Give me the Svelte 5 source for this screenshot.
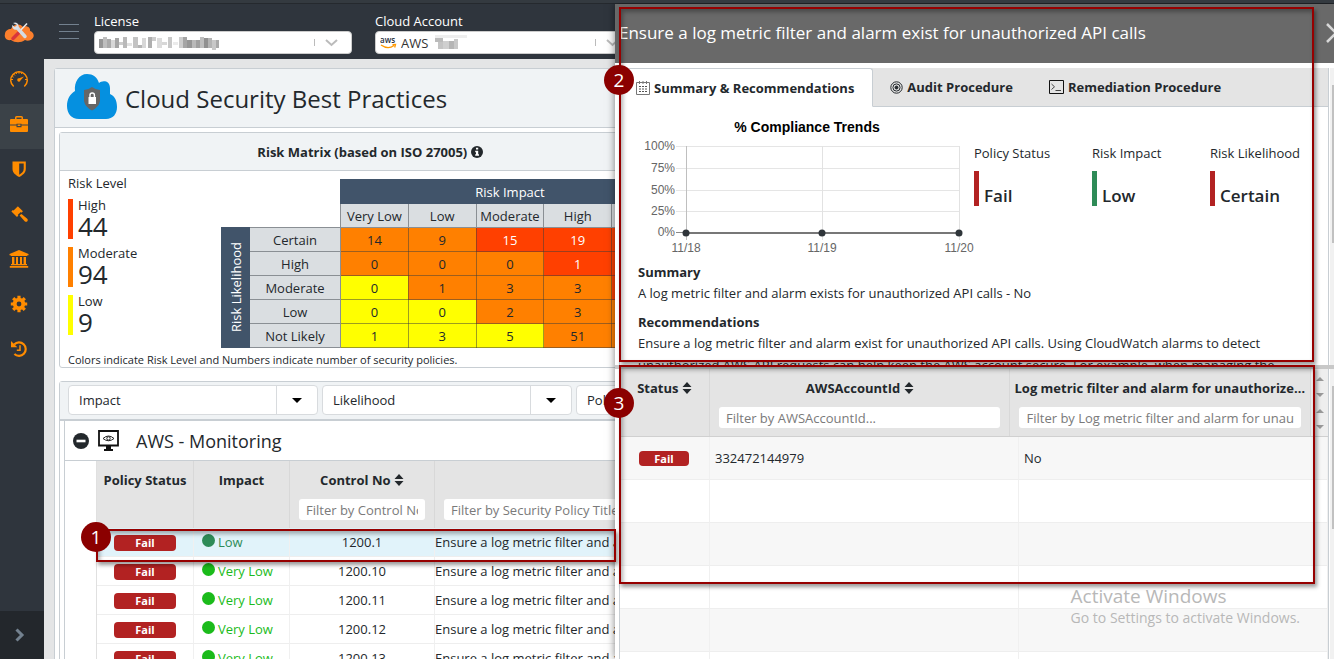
<script>
  const nav = ['gauge', 'case', 'shield', 'gavel', 'bank', 'gear', 'history'];
  const levels = [
    { name: 'High', count: 44, color: '#ff4000' },
    { name: 'Moderate', count: 94, color: '#ff8000' },
    { name: 'Low', count: 9, color: '#ffff00' }
  ];
  const impacts = ['Very Low', 'Low', 'Moderate', 'High', 'Very High'];
  const matrix = [
    { name: 'Certain', cells: [[14, 'o'], [9, 'o'], [15, 'r'], [19, 'r'], [0, 'r']] },
    { name: 'High', cells: [[0, 'o'], [0, 'o'], [0, 'o'], [1, 'r'], [0, 'r']] },
    { name: 'Moderate', cells: [[0, 'y'], [1, 'o'], [3, 'o'], [3, 'o'], [0, 'r']] },
    { name: 'Low', cells: [[0, 'y'], [0, 'y'], [2, 'o'], [3, 'o'], [0, 'o']] },
    { name: 'Not Likely', cells: [[1, 'y'], [3, 'y'], [5, 'y'], [51, 'o'], [0, 'o']] }
  ];
  const filters = ['Impact', 'Likelihood', 'Policy Status'];
  const title = 'Ensure a log metric filter and alarm exist for unauthorized API calls';
  const policies = [
    { impact: 'Low', no: '1200.1', selected: true },
    { impact: 'Very Low', no: '1200.10' },
    { impact: 'Very Low', no: '1200.11' },
    { impact: 'Very Low', no: '1200.12' },
    { impact: 'Very Low', no: '1200.13' }
  ];
  const stats = [
    { name: 'Policy Status', value: 'Fail', color: '#b22222' },
    { name: 'Risk Impact', value: 'Low', color: '#2e8b57' },
    { name: 'Risk Likelihood', value: 'Certain', color: '#b22222' }
  ];
  const ticks = ['100%', '75%', '50%', '25%', '0%'];
  const tickY = [19, 41, 63, 84, 105];
  const days = [['11/18', 48], ['11/19', 184], ['11/20', 321]];
  const mask = [
    [0, 4, 4, 9, 150], [4, 2, 4, 11, 190], [8, 4, 4, 9, 170], [12, 5, 4, 8, 215], [16, 3, 4, 10, 165],
    [20, 7, 4, 3, 205], [24, 2, 4, 11, 185], [28, 8, 5, 3, 225], [34, 2, 5, 11, 195], [39, 10, 4, 3, 180],
    [43, 3, 4, 10, 215], [49, 2, 4, 11, 175], [53, 2, 4, 4, 205], [58, 3, 5, 10, 220], [63, 7, 5, 3, 215],
    [69, 2, 4, 11, 200], [74, 7, 5, 3, 235], [80, 2, 4, 11, 205], [84, 2, 4, 11, 165], [88, 5, 5, 8, 150],
    [93, 5, 4, 8, 185], [97, 5, 4, 8, 160], [101, 2, 4, 11, 190], [105, 3, 4, 10, 145], [109, 3, 4, 10, 180],
    [113, 5, 4, 10, 200], [117, 5, 3, 8, 170]
  ];
</script>

{#snippet sort()}
  <svg class="sort" width="10" height="12" viewBox="0 0 10 12"><path d="M5 0l4.500 5h-9zM5 12l4.500-5h-9z" /></svg>
{/snippet}

{#snippet icon(name)}
  <svg width="20" height="20" viewBox="0 0 20 20" fill="#ff8c00" stroke="#ff8c00" stroke-width="0">
    {#if name === 'gauge'}
      <path d="M4.700 17.500A8.300 8.300 0 1 1 15.300 17.500" fill="none" stroke-width="1.500" />
      <path d="M2 10.500h2M16 10.500h2M10 2.500v2.200M4.500 5l1.500 1.500M7 3.500l.6 1.500M13 3.500L12.400 5M3 7.500l1.600.7" stroke-width="1" />
      <path d="M15 7.500l-3.400 3.800a1.700 1.700 0 1 1-1.500-2z" />
    {:else if name === 'case'}
      <path fill-rule="evenodd" d="M6 5V3.500Q6 2 7.500 2h5Q14 2 14 3.500V5h4q1 0 1 1v4.500h-6.500V9.800h-5v.7H1V6q0-1 1-1zM7.500 5h5V3.500h-5zM1 11.500h6.500v1.700h5v-1.700H19V17q0 1-1 1H2q-1 0-1-1z" />
      <path d="M8.600 10.500h2.800v1.500H8.600z" />
    {:else if name === 'shield'}
      <path fill-rule="evenodd" d="M3.500 2.500h13.300V10c0 4-3.700 6.500-6.600 8C7.300 16.500 3.500 14 3.500 10zM10.200 4.500v11.200c2.500-1.500 4.500-3.200 4.500-6V4.500z" />
    {:else if name === 'gavel'}
      <path d="M8.300 1.700l5.600 5.600-1.400 1.400-.7-.7-1.500 1.500 1.200 1.200 1-.8 6 5.200q.8 1.300-.3 2.300-1 .9-2.300 0l-5.300-5.800.8-1-1.200-1.200-1.500 1.500.7.700L8 13 2.400 7.400 3.800 6l.8.6 4.300-4.300z" />
    {:else if name === 'bank'}
      <path d="M10 1l9.500 4v1.300h-1.200V7H1.700v-.7H.5V5zM3 8h2.400v7H7V8h2v7h2V8h2v7h1.600V8H17v7h1v1.300H2V15h1zM.8 17h18.400v1.800H.8z" />
    {:else if name === 'gear'}
      <circle cx="10" cy="10" r="4.300" fill="none" stroke-width="3.800" />
      <path d="M10 1.800v3M10 15.200v3M1.800 10h3M15.200 10h3M4.200 4.200l2 2M13.800 13.800l2 2M4.200 15.800l2-2M13.800 6.200l2-2" stroke-width="3.200" />
    {:else}
      <path d="M5.200 5.500A6.700 6.700 0 1 1 5.400 15" fill="none" stroke-width="2.200" />
      <path d="M2 2l6.300 6.300H2z" />
      <path d="M11 6.300v5H7.800" fill="none" stroke-width="1.500" />
    {/if}
  </svg>
{/snippet}

<div class="app">
  <nav class="side">
    <a class="logo" href="#home" aria-label="Home">
      <svg width="31" height="22" viewBox="0 0 31 22">
        <path d="M7 19C2 20 0 16 1 13c0-3 3-5 6-5 2-5 9-6 12-2 4-2 8 1 7 4 4 1 5 6 2 8-2 2-5 2-7 1-4 3-10 3-14 0z" fill="#fb7f2d" />
        <path d="M23 2.500L14 12" stroke="#e8eaee" stroke-width="1.500" />
        <path d="M14.500 12L9 17.500" stroke="#d9363b" stroke-width="3.500" stroke-linecap="round" />
        <path d="M13 6.500l8 9" stroke="#d5dbe2" stroke-width="3.500" stroke-linecap="round" />
        <path d="M9 2c4-2 7 2 5 6-3 2-6 0-6-4l3 2 2-2z" fill="#dbe1e8" />
      </svg>
    </a>
    {#each nav as n}
      <a class="item" class:on={n === 'case'} href={'#' + n} aria-label={n}>{@render icon(n)}</a>
    {/each}
    <button class="expand" aria-label="Expand">
      <svg width="12" height="14" viewBox="0 0 12 14"><path d="M2.500 1.500L8 7l-5.500 5.500" fill="none" stroke="#73818f" stroke-width="3" /></svg>
    </button>
  </nav>

  <div class="main">
    <header class="top">
      <button class="burger" aria-label="Menu"><i></i><i></i><i></i></button>
      <div class="pick">
        <label for="license">License</label>
        <div class="box">
          <svg class="mask" width="120" height="16" viewBox="0 0 120 16">
            {#each mask as [x, y, w, h, g]}<rect {x} {y} width={w} height={h} fill="rgb({g},{g},{g})" />{/each}
          </svg>
          <select id="license"><option></option></select>
          <span class="arrow"><svg width="13" height="8" viewBox="0 0 13 8"><path d="M1 1l5.500 5L12 1" /></svg></span>
        </div>
      </div>
      <div class="pick">
        <label for="account">Cloud Account</label>
        <div class="box">
          <svg width="17" height="14" viewBox="0 0 17 14">
            <text x="0" y="7" font-size="8" font-weight="600" fill="#252f3e">aws</text>
            <path d="M1 9q7 5 13 0.500M12.500 8.700l3-.2-.8 3" fill="none" stroke="#ff9900" stroke-width="1.300" />
          </svg>
          <select id="account" class="aws"><option>AWS</option></select>
          <svg class="over" width="32" height="16" viewBox="0 0 32 16">
            <path d="M0 0h32v3H0z" fill="#eee" /><path d="M0 3h8v4H0z" fill="#bbb" /><path d="M3 7h5v7H3z" fill="#c4c4c4" />
            <path d="M8 6h6v8H8z" fill="#cfcfcf" /><path d="M14 6h5v8h-5z" fill="#b5b5b5" /><path d="M19 4h4v10h-4z" fill="#c8c8c8" />
          </svg>
          <span class="arrow"><svg width="13" height="8" viewBox="0 0 13 8"><path d="M1 1l5.500 5L12 1" /></svg></span>
        </div>
      </div>
    </header>

    <main class="page">
      <div class="title">
        <svg width="50" height="45" viewBox="0 0 50 45">
          <path d="M12 45C4 45 0 39 0 32c0-7 3-12 8-15C7 8 12 0 20 0c6 0 10 3 12 9 3-3 11-3 11 5v6c5 2 7 7 7 13 0 7-4 12-11 12z" fill="#0590e0" />
          <path d="M25 13q4 3 8 3v11q-1 6-8 9.500-7-3.500-8-9.500V16q4 0 8-3z" fill="#666" />
          <path d="M21.500 23h7.500v7h-7.500z" fill="#fff" />
          <path d="M23 23v-2q0-2 2.200-2t2.200 2v2" fill="none" stroke="#fff" stroke-width="1.400" />
        </svg>
        <h1>Cloud Security Best Practices</h1>
      </div>
      <div class="body">
        <div class="halves">
          <section class="card">
            <h2>Risk Matrix (based on ISO 27005)
              <svg width="12" height="12" viewBox="0 0 12 12"><circle cx="6" cy="6" r="6" fill="#23282c" /><path d="M5 1.800h2.200v1.800H5zM4.200 4.700h3v3.600h.8v1.500H4.200V8.300H5V6.200h-.8z" fill="#fff" /></svg>
            </h2>
            <div class="risk">
              <div class="levels">
                <h3>Risk Level</h3>
                {#each levels as l}
                  <div class="level" style:border-color={l.color}><span>{l.name}</span><b>{l.count}</b></div>
                {/each}
              </div>
              <table class="matrix">
                <colgroup><col class="c1" /><col class="c2" />{#each impacts as _}<col />{/each}</colgroup>
                <thead>
                  <tr><td class="none" colspan="2"></td><th class="dark" colspan="5">Risk Impact</th></tr>
                  <tr><td class="none" colspan="2"></td>{#each impacts as i}<th>{i}</th>{/each}</tr>
                </thead>
                <tbody>
                  {#each matrix as row, r}
                    <tr>
                      {#if r === 0}<th class="dark tall" rowspan="5"><span>Risk Likelihood</span></th>{/if}
                      <th>{row.name}</th>
                      {#each row.cells as [n, c]}<td class={c}>{n}</td>{/each}
                    </tr>
                  {/each}
                </tbody>
              </table>
            </div>
            <p class="note">Colors indicate Risk Level and Numbers indicate number of security policies.</p>
          </section>
          <section class="card"></section>
        </div>

        <section class="list">
          <div class="filters">
            {#each filters as f}
              <div class="combo">
                <select aria-label={f}><option>{f}</option></select>
                <span><svg width="10" height="5" viewBox="0 0 10 5"><path d="M0 0h10L5 5z" /></svg></span>
              </div>
            {/each}
          </div>
          <div class="group">
            <div class="ghead">
              <button class="fold" aria-label="Collapse"><svg width="16" height="16" viewBox="0 0 16 16"><circle cx="8" cy="8" r="8" fill="#23282c" /><path d="M3.500 6.700h9v2.600h-9z" fill="#fff" /></svg></button>
              <svg width="21" height="21" viewBox="0 0 21 21"><path d="M1 1h19v14.500H1z" fill="#fff" stroke="#111" stroke-width="1.800" /><path d="M8 16h5v3h2v2H6v-2h2z" fill="#111" /><path d="M5 8.500q5.500-5 11 0-5.500 4.500-11 0z" fill="none" stroke="#222" /><circle cx="10.500" cy="8.400" r="1.700" fill="none" stroke="#222" /></svg>
              <h2>AWS - Monitoring</h2>
            </div>
            <table class="rows">
              <thead>
                <tr>
                  <th><span>Policy Status</span></th>
                  <th><span>Impact</span></th>
                  <th><span>Control No {@render sort()}</span><input aria-label="Control No" placeholder="Filter by Control No..." /></th>
                  <th><span>Security Policy Title {@render sort()}</span><input aria-label="Title" placeholder="Filter by Security Policy Title..." /></th>
                </tr>
              </thead>
              <tbody>
                {#each policies as p}
                  <tr class:selected={p.selected}>
                    <td><span class="fail">Fail</span></td>
                    <td class:low={p.impact === 'Low'}><i></i>{p.impact}</td>
                    <td>{p.no}</td>
                    <td>{title}</td>
                  </tr>
                {/each}
              </tbody>
            </table>
          </div>
        </section>
      </div>
    </main>
  </div>

  <aside class="drawer">
    <header>
      <h2>{title}</h2>
      <button aria-label="Close"><svg width="20" height="20" viewBox="0 0 20 20"><path d="M1 1l18 18M19 1L1 19" stroke="#d8d8d8" stroke-width="2.500" /></svg></button>
    </header>
    <div class="pane">
      <div class="content">
        <div class="tabs" role="tablist">
          <button role="tab" aria-selected="true" class="on">
            <svg width="14" height="14" viewBox="0 0 14 14" fill="none" stroke="#777"><path d="M.5 1.500h13v12H.5zM3.500 0v3M7 0v3M10.500 0v3" /><path d="M3 5.500h8M3 8h8M3 10.500h8" stroke="#555" stroke-dasharray="2 1" /></svg>
            Summary &amp; Recommendations
          </button>
          <button role="tab" aria-selected="false">
            <svg width="13" height="13" viewBox="0 0 13 13" fill="none" stroke="#23282c"><circle cx="6.500" cy="6.500" r="5.700" /><circle cx="6.500" cy="6.500" r="3.600" /><circle cx="6.500" cy="6.500" r="1.500" fill="#23282c" /></svg>
            Audit Procedure
          </button>
          <button role="tab" aria-selected="false">
            <svg width="15" height="14" viewBox="0 0 15 14" fill="none" stroke="#111"><path d="M.5.5h14v13H.5z" /><path d="M2.500 4l3 2.800-3 2.700M6.500 10.500H12" stroke="#444" /></svg>
            Remediation Procedure
          </button>
        </div>
        <div class="info">
          <div class="glance">
            <svg class="chart" width="330" height="130" viewBox="0 0 330 130">
              <text x="169" y="5" class="ct">% Compliance Trends</text>
              {#each ticks as t, i}
                <path d="M38 {tickY[i]}.5H321" stroke="#e5e5e5" />
                <text x="37" y={tickY[i] + 4} text-anchor="end">{t}</text>
              {/each}
              {#each days as [d, x]}
                <path d="M{x}.5 19V113" stroke={x === 48 ? '#bfbfbf' : '#e2e2e2'} />
                <text {x} y="125" text-anchor="middle">{d}</text>
              {/each}
              <path d="M38 105.500H321" stroke="#888" />
              <path d="M48 106H321" stroke="#777" stroke-width="2" />
              {#each days as [, x]}<circle cx={x} cy="106" r="3.500" fill="#2f353a" />{/each}
            </svg>
            <div class="stats">
              {#each stats as s}
                <div><span>{s.name}</span><b style:border-color={s.color}>{s.value}</b></div>
              {/each}
            </div>
          </div>
          <h4>Summary</h4>
          <p>A log metric filter and alarm exists for unauthorized API calls - No</p>
          <h4>Recommendations</h4>
          <p>Ensure a log metric filter and alarm exist for unauthorized API calls. Using CloudWatch alarms to detect unauthorized AWS API requests can help keep the AWS account secure. For example, when managing the</p>
        </div>
      </div>
      <div class="bar"><i></i></div>
    </div>
    <div class="split"></div>
    <div class="pane results">
      <div class="content">
        <table class="found">
          <thead>
            <tr>
              <th><span>Status {@render sort()}</span></th>
              <th><span>AWSAccountId {@render sort()}</span><input aria-label="AWSAccountId" placeholder="Filter by AWSAccountId..." /></th>
              <th><span>Log metric filter and alarm for unauthorized API calls</span><input aria-label="Log metric filter" placeholder="Filter by Log metric filter and alarm for unauthorized API calls..." /></th>
              <td class="spin">{#each [0, 1] as _}<i class="up"></i><i class="down"></i>{/each}</td>
            </tr>
          </thead>
          <tbody>
            <tr><td><span class="fail">Fail</span></td><td>332472144979</td><td>No</td></tr>
            {#each [1, 2, 3, 4, 5] as _}<tr><td></td><td></td><td></td></tr>{/each}
          </tbody>
        </table>
      </div>
      <div class="bar low"><i></i></div>
    </div>
    <div class="activate"><b>Activate Windows</b><span>Go to Settings to activate Windows.</span></div>
  </aside>

  <div class="mark one"><b>1</b></div>
  <div class="mark two"><b>2</b></div>
  <div class="mark three"><b>3</b></div>
</div>

<style>
  :global(body) { margin: 0; overflow: hidden; }
  .app, .app :global(*) { box-sizing: border-box; }
  .app {
    position: relative; display: flex; height: 100vh; overflow: hidden;
    font: 13px/20px "Open Sans", "Noto Sans", sans-serif; color: #23282c;
    background: #e4e5e6; border-top: 3px solid #343a40;
  }
  h1, h2, h3, h4, p { margin: 0; }
  button { border: 0; padding: 0; background: none; font: inherit; color: inherit; }
  select, input { font: inherit; color: inherit; min-width: 0; }
  svg { flex: none; }
  i { display: block; }

  .side { flex: none; width: 44px; display: flex; flex-direction: column; background: #2f353d; border-top: 1px solid #25292e; }
  .logo { height: 55px; display: flex; align-items: center; padding-left: 4px; }
  .item { height: 45px; display: flex; align-items: center; justify-content: center; padding: 0 6px 5px 0; }
  .item.on { background: #3b4248; }
  .expand { margin-top: auto; height: 48px; background: #23272c; padding: 0 4px 0 0; display: flex; align-items: center; justify-content: center; }

  .main { flex: 1; min-width: 0; display: flex; flex-direction: column; }
  .top { height: 56px; flex: none; display: flex; gap: 23px; padding-left: 15px; background: #2f353d; border-top: 1px solid #25292e; }
  .burger { width: 20px; margin: 20px -8px 0 0; display: flex; flex-direction: column; gap: 6px; }
  .burger i { width: 20px; height: 1px; background: #73818f; }
  .pick { width: 258px; padding-top: 7px; color: #fff; }
  .pick label { display: block; }
  .box { display: flex; align-items: center; gap: 4px; height: 23px; padding: 0 4px; background: #fff; border: 1px solid #ccc; border-radius: 4px; color: #333; }
  .box select { flex: 1; border: 0; background: none; appearance: none; padding: 0; outline: 0; }
  .box select.aws { flex: none; width: 30px; }
  .over { margin-right: auto; }
  .arrow { width: 33px; height: 7px; display: flex; align-items: center; justify-content: center; border-left: 1px solid #bbb; }
  .arrow path { fill: none; stroke: #bbb; stroke-width: 2; }

  .page { flex: 1; margin: 9px 10px 0; background: #fff; border: 1px solid #c8ced3; border-radius: 3px 3px 0 0; }
  .title { height: 59px; display: flex; align-items: center; gap: 8px; padding: 0 12px 4px; background: #f0f3f5; border-bottom: 1px solid #c8ced3; }
  .title h1 { font-size: 24px; line-height: 36px; font-weight: 500; padding-top: 6px; }
  .body { padding: 4px; }
  .halves { display: grid; grid-template-columns: 1fr 1fr; gap: 16px; }
  .card { border: 1px solid #c8ced3; border-radius: 3px; }
  .card h2 { height: 38px; font-size: 13px; line-height: 38px; text-align: center; background: #f0f3f5; border-bottom: 1px solid #c8ced3; }
  .card h2 svg { vertical-align: -1px; }
  .risk { display: flex; justify-content: space-between; align-items: end; padding: 6px 0 0 8px; }
  .levels { align-self: start; }
  .levels h3 { font-size: 13px; line-height: 12px; font-weight: 500; margin-bottom: 10px; }
  .level { display: flex; flex-direction: column; height: 40px; border-left: 5px solid; padding-left: 5px; margin-bottom: 8px; }
  .level span { line-height: 13px; }
  .level b { font-size: 26px; line-height: 28px; font-weight: 400; }
  .matrix { width: 459px; margin-top: 2px; table-layout: fixed; border-collapse: collapse; text-align: center; }
  .c1 { width: 28px; }
  .c2 { width: 91px; }
  .matrix th, .matrix td { height: 24px; padding: 0; line-height: 22px; border: 1px solid #8a8f94; font-weight: 400; white-space: nowrap; }
  .matrix th { background: #dadee1; }
  .matrix .none { border: 0; }
  .matrix .dark { background: #41546a; color: #fff; font-weight: 500; border-color: #41546a; }
  .tall span { writing-mode: vertical-rl; transform: rotate(180deg); line-height: 26px; vertical-align: middle; }
  .matrix tbody td { color: #23282c; border-color: rgba(60, 60, 60, .5); }
  .matrix .o { background: #ff8000; }
  .matrix .y { background: #ffff00; }
  .matrix td.r { background: #ff4000; color: #fff; }
  .note { font-size: 11px; line-height: 14px; padding: 5px 8px 0; }

  .list { margin-top: 13px; border: 1px solid #c8ced3; border-radius: 3px; }
  .filters { display: flex; gap: 4px; height: 39px; padding: 3px 8px; background: #f0f3f5; border-bottom: 2px solid #c8ced3; }
  .combo { display: flex; flex: none; width: 250px; height: 30px; background: #fff; border: 1px solid #d8dbde; border-radius: 4px; }
  .combo select { flex: 1; border: 0; background: none; appearance: none; padding: 0 10px; }
  .combo span { width: 41px; display: flex; align-items: center; justify-content: center; border-left: 1px solid #d8dbde; }
  .group { margin-left: 4px; border-left: 1px solid #c8ced3; }
  .ghead { height: 40px; display: flex; align-items: center; gap: 9px; padding-left: 8px; border-bottom: 1px solid #c8ced3; }
  .fold { height: 16px; }
  .ghead h2 { font-size: 18px; font-weight: 500; padding-left: 8px; }
  .rows { display: block; margin-left: 31px; border-left: 1px solid #e0e0e0; }
  .rows thead, .rows tbody, .found thead, .found tbody { display: block; }
  .rows tr, .found tr { display: flex; }
  .rows th, .rows td, .found th, .found td { padding: 0; overflow: hidden; white-space: nowrap; border-right: 1px solid #f0f0f0; }
  .rows th:nth-child(1), .rows td:nth-child(1) { width: 97px; }
  .rows th:nth-child(2), .rows td:nth-child(2) { width: 96px; }
  .rows th:nth-child(3), .rows td:nth-child(3) { width: 145px; }
  .rows th:nth-child(4), .rows td:nth-child(4) { flex: 1; }
  thead th { height: 67px; background: #e4e4e4; text-align: center; }
  .rows thead th, .found thead th { border-right-color: #d8d8d8; }
  thead th > span { display: block; padding: 9px 4px; line-height: 20px; overflow: hidden; text-overflow: ellipsis; }
  .sort { vertical-align: -1px; fill: #23282c; }
  thead input { display: block; width: calc(100% - 18px); height: 21px; margin: 0 9px; padding: 0 7px; border: 0; border-radius: 3px; background: #fff; font-weight: 400; }
  input::placeholder { color: #7a7a7a; opacity: 1; }
  .rows td { height: 29px; line-height: 28px; border-bottom: 1px solid #eee; }
  .rows td:nth-child(2) { display: flex; gap: 3px; padding-left: 8px; color: #1bbb1b; }
  .rows td:nth-child(2) i { width: 13px; height: 13px; margin-top: 6px; border-radius: 50%; background: currentColor; }
  .rows td:nth-child(2).low { color: #2e8b57; }
  .rows td:nth-child(3) { text-align: center; }
  .rows .selected td { background: #e1f3fa; }
  .fail { display: block; height: 16px; background: #b22222; color: #fff; border-radius: 4px; font-size: 11px; line-height: 16px; font-weight: 700; text-align: center; }
  .rows .fail { width: 62px; margin: 7px 17px; }

  .drawer { position: absolute; left: 46.1%; right: 0; top: 1px; bottom: 0; display: flex; flex-direction: column; background: #fff; box-shadow: 0 0 8px rgba(0, 0, 0, .5); }
  .drawer header { flex: none; height: 59px; display: flex; align-items: center; justify-content: space-between; padding: 0 0 2px 4px; background: #696969; color: #fff; overflow: hidden; }
  .drawer h2 { font-size: 17px; font-weight: 400; white-space: nowrap; }
  .drawer header button { margin-right: -12px; height: 20px; }
  .pane { flex: none; height: 302px; display: flex; gap: 1px; padding: 5px 0 0 4px; }
  .content { flex: 1; min-width: 0; overflow: hidden; display: flex; flex-direction: column; border: 1px solid #c8ced3; border-width: 0 1px; }
  .bar { width: 4px; background: #f1f1f1; padding: 17px 0 0 2px; }
  .bar i { height: 158px; background: #c1c1c1; }
  .tabs { flex: none; display: flex; height: 39px; background: #e4e4e4; margin-left: -1px; }
  .tabs button { display: flex; align-items: center; gap: 4px; padding: 0 19px 0 17px; font-weight: 700; white-space: nowrap; border-bottom: 1px solid #c8ced3; }
  .tabs button.on { background: #fff; border: 1px solid #c8ced3; border-bottom-color: #fff; border-radius: 3px 3px 0 0; padding: 0 18px 0 16px; }
  .tabs::after { content: ""; flex: 1; border-bottom: 1px solid #c8ced3; }
  .info { padding: 20px 0 0 18px; }
  .glance { display: flex; gap: 6px; margin-bottom: 5px; }
  .chart { overflow: visible; font: 12px "Liberation Sans", sans-serif; }
  .chart text { fill: #666; }
  .chart .ct { font-size: 14px; font-weight: 700; fill: #000; text-anchor: middle; }
  .stats { flex: 1; display: grid; grid-template-columns: repeat(3, 1fr); align-content: start; padding-top: 16px; }
  .stats span { display: block; white-space: nowrap; }
  .stats b { display: flex; align-items: end; height: 35px; margin-top: 8px; padding-left: 5px; border-left: 5px solid; font-size: 17px; line-height: 20px; font-weight: 600; }
  .info h4 { font-size: 13px; line-height: 20px; }
  .info p { line-height: 22px; margin-bottom: 8px; padding-right: 18px; }
  .split { flex: none; height: 4px; background: #c8c8c8; }
  .results { flex: 1; padding-top: 0; min-height: 0; }
  .bar.low i { height: 143px; }
  .found { display: block; }
  .found thead { background: #e4e4e4; border-bottom: 1px solid #d0d0d0; }
  .found th:first-child, .found tbody td:first-child { width: 90px; }
  .found th:nth-child(2), .found th:nth-child(3), .found tbody td:nth-child(2), .found tbody td:nth-child(3) { flex: 1; width: 0; }
  .found td.spin { width: 17px; height: 67px; background: #eee; padding: 8px 5px 0; border: 0; }
  .spin i { border: 4px solid transparent; border-top: 0; border-bottom-color: #999; margin-bottom: 12px; }
  .spin .down { border-top: 4px solid #999; border-bottom: 0; }
  .found tbody td { height: 43px; line-height: 42px; padding: 0 5px; border-bottom: 1px solid #eee; }
  .found tbody tr:nth-child(odd) { background: #f7f7f7; }
  .found .fail { width: 50px; margin: 14px; line-height: 16px; height: 15px; }
  .activate { position: absolute; right: 34px; bottom: 31px; display: flex; flex-direction: column; color: #b8b8b8; font-size: 14px; }
  .activate b { font-size: 19px; line-height: 24px; font-weight: 400; }

  .mark { position: absolute; border: 2px solid #960000; box-shadow: 2px 3px 4px rgba(0, 0, 0, .4), inset 2px 3px 4px rgba(0, 0, 0, .3); pointer-events: none; }
  .mark b { position: absolute; left: -17px; width: 30px; height: 30px; border-radius: 50%; background: #8b0000; color: #fff; font: 19px/30px "Open Sans", sans-serif; text-align: center; }
  .one { left: 96px; width: 520px; top: 526px; height: 33px; }
  .two { left: 619px; right: 20px; top: 4px; height: 355px; }
  .three { left: 619px; right: 19px; top: 362px; height: 219px; }
  .one b { top: -9px; }
  .two b { top: 56px; }
  .three b { top: 21px; }
</style>
